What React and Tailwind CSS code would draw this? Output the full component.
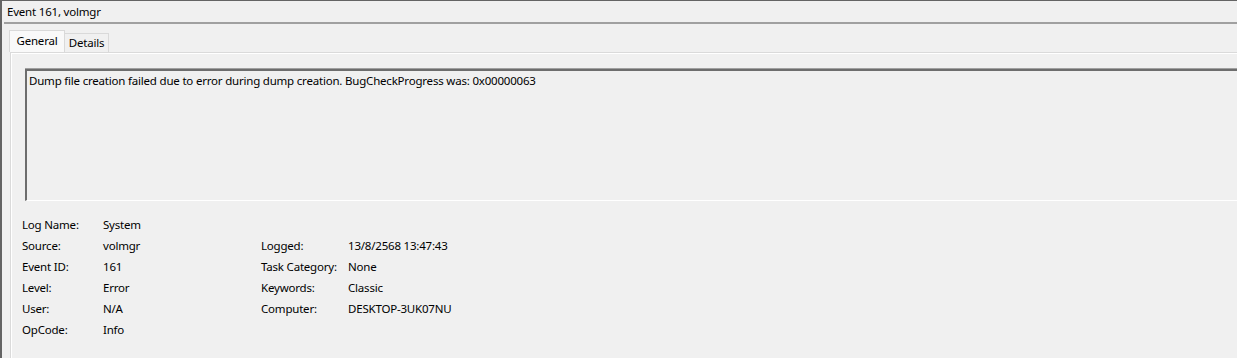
import React from "react";

const rows = [
  ["Log Name:", "System", "", ""],
  ["Source:", "volmgr", "Logged:", "13/8/2568 13:47:43"],
  ["Event ID:", "161", "Task Category:", "None"],
  ["Level:", "Error", "Keywords:", "Classic"],
  ["User:", "N/A", "Computer:", "DESKTOP-3UK07NU"],
  ["OpCode:", "Info", "", ""],
];

export default function App() {
  return (
    <div
      className="w-[1237px] h-[358px] overflow-hidden bg-[#f0f0f0] border-t border-l-2 border-[#646464] text-[11.5px] tracking-[-0.2px] text-black flex flex-col"
      style={{ fontFamily: '"Noto Sans", "Open Sans", sans-serif' }}
    >
      {/* title */}
      <div className="h-[21px] pl-[5px] flex items-center leading-none">
        Event 161, volmgr
      </div>
      <div className="ml-[2px] h-[2px] bg-[#a0a0a0]"></div>

      {/* tabs */}
      <div className="mt-[6px] pl-[7px] flex items-end">
        <div className="h-[22px] w-[56px] border border-b-0 border-[#d9d9d9] bg-[#f9f9f9] flex items-center justify-center leading-none pb-[2px]">
          General
        </div>
        <div className="h-[19px] w-[44px] border border-l-0 border-b-0 border-[#d9d9d9] flex items-center justify-center leading-none">
          Details
        </div>
      </div>

      {/* panel */}
      <div className="ml-[8px] flex-1 border-t border-l border-[#dadada] shadow-[inset_1px_1px_0_#ffffff] pl-[11px] pt-[16px]">
        <div className="ml-[3px] h-[132px] border-t-2 border-l-2 border-[#6d6d6d] border-b border-b-[#ffffff] shadow-[0_-1px_0_#a0a0a0] pl-[2px] pt-[2px] leading-[16px]">
          Dump file creation failed due to error during dump creation. BugCheckProgress was: 0x00000063
        </div>

        <div className="mt-[13px] grid grid-cols-[81px_158px_87px_auto] auto-rows-[21px] items-center leading-none">
          {rows.map((r, i) => (
            <React.Fragment key={i}>
              <div>{r[0]}</div>
              <div>{r[1]}</div>
              <div>{r[2]}</div>
              <div>{r[3]}</div>
            </React.Fragment>
          ))}
        </div>
      </div>
    </div>
  );
}
